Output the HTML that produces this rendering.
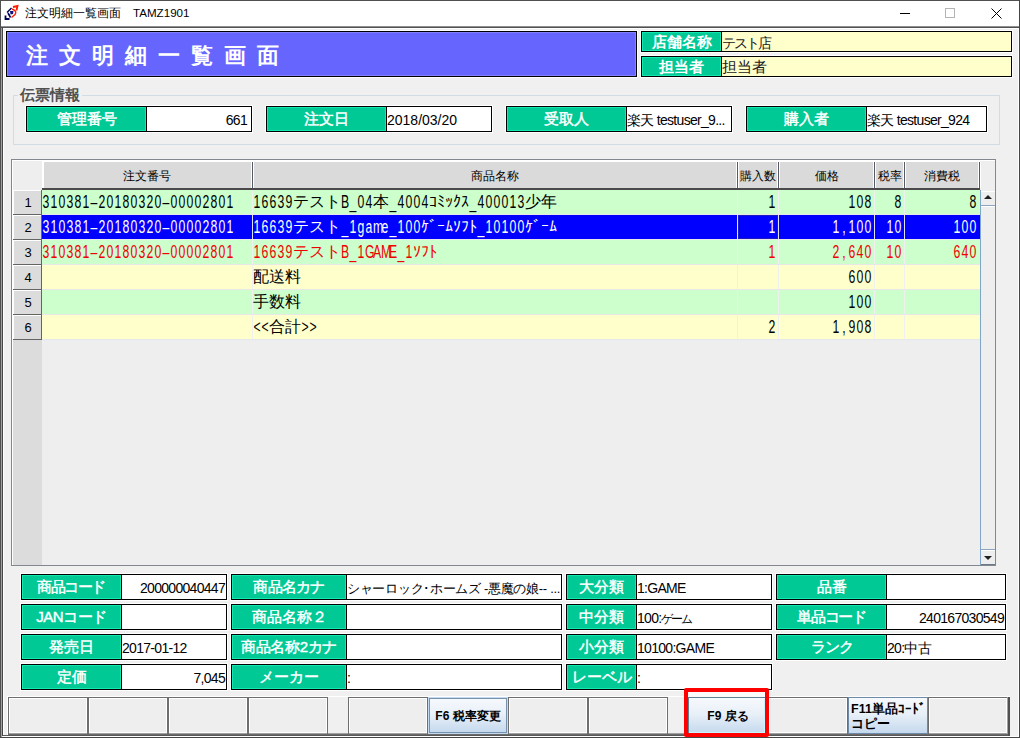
<!DOCTYPE html><html><head><meta charset="utf-8"><style>
*{margin:0;padding:0;box-sizing:border-box}
html,body{width:1020px;height:738px;overflow:hidden;background:#F0F0F0;font-family:"Liberation Sans",sans-serif;position:relative}
.ga{display:inline-block;vertical-align:top;overflow:visible;font-family:"Liberation Sans",sans-serif;font-size:17.5px}
.ga>span{display:inline-block;transform:scaleX(0.7);transform-origin:0 0;white-space:nowrap}
.ga i{display:inline-block;width:11.4286px;text-align:center;font-style:normal}
.gj{font-family:"Liberation Sans",sans-serif;font-size:16px}
.g{position:absolute;white-space:nowrap;line-height:24px;height:24px;color:#000}
.lab{position:absolute;color:#fff;text-align:center;white-space:nowrap}
.val{position:absolute;color:#000;white-space:nowrap;font-size:13px}
</style></head><body>
<div style="position:absolute;left:0px;top:0px;width:1020px;height:738px;background:#F0F0F0"></div>
<div style="position:absolute;left:1px;top:1px;width:1018px;height:25px;background:#FFFFFF"></div>
<div style="position:absolute;left:0px;top:0px;width:1020px;height:1px;background:#505050"></div>
<div style="position:absolute;left:0px;top:0px;width:1px;height:738px;background:#505050"></div>
<div style="position:absolute;left:1px;top:26px;width:1px;height:712px;background:#A0A0A0"></div>
<div style="position:absolute;left:2px;top:26px;width:1px;height:712px;background:#454545"></div>
<div style="position:absolute;left:1019px;top:0px;width:1px;height:738px;background:#454545"></div>
<div style="position:absolute;left:1018px;top:26px;width:1px;height:712px;background:#FFFFFF"></div>
<div style="position:absolute;left:0px;top:737px;width:1020px;height:1px;background:#454545"></div>
<div style="position:absolute;left:2px;top:736px;width:1017px;height:1px;background:#FFFFFF"></div>
<div style="position:absolute;left:1px;top:26px;width:1018px;height:1px;background:#909090"></div>
<div style="position:absolute;left:1px;top:27px;width:1018px;height:1px;background:#505050"></div>
<div style="position:absolute;left:3px;top:28px;width:1015px;height:1px;background:#FFFFFF"></div>
<div style="position:absolute;left:3px;top:28px;width:1px;height:708px;background:#FFFFFF"></div>
<svg style="position:absolute;left:0px;top:0px" width="24" height="24" viewBox="0 0 24 24">
<path d="M11.5 8 L7 12.5" stroke="#000050" stroke-width="1.4" fill="none"/>
<path d="M8 13 L10.5 17.5" stroke="#000050" stroke-width="1.6" fill="none"/>
<path d="M5.5 15.5 L5.5 19 L9.5 19" stroke="#000050" stroke-width="1.8" fill="none"/>
<path d="M10 11 L13.5 11 L13 14 L10.5 14.5 Z" fill="#101080"/>
<path d="M12 9 Q17.5 11 15 14.5 L11.5 17.5" stroke="#FF1A00" stroke-width="1.4" fill="none"/>
<path d="M13 7 L17.5 6 L16.5 10.5" stroke="#FF1A00" stroke-width="1.8" fill="none"/>
</svg>
<div style="position:absolute;left:25px;top:5px;white-space:nowrap;font-size:12px;color:#000;line-height:16px">注文明細一覧画面　<span style="font-size:11.6px">TAMZ1901</span></div>
<div style="position:absolute;left:900px;top:13px;width:10px;height:1px;background:#000"></div>
<div style="position:absolute;left:945px;top:8px;width:10px;height:10px;border:1px solid #B4B4B4"></div>
<svg style="position:absolute;left:990px;top:7px" width="12" height="12" viewBox="0 0 12 12"><path d="M1.5 1.5 L11.5 11.5 M11.5 1.5 L1.5 11.5" stroke="#000" stroke-width="1"/></svg>
<div style="position:absolute;left:6px;top:31px;width:631px;height:46px;background:#6666FF;border:1px solid #000;box-shadow:0 0 0 1px #FFFFFF,inset 0 0 0 1px #8282FF"></div>
<div style="position:absolute;left:26px;top:42px;white-space:nowrap;font-size:22px;font-weight:bold;color:#fff;letter-spacing:2.43px;word-spacing:0px;line-height:28px">注 文 明 細 一 覧 画 面</div>
<div style="position:absolute;left:641px;top:31px;width:371px;height:21px;background:#FFFFCC;border:1px solid #000;box-shadow:0 0 0 1px #FFFFFF"></div>
<div style="position:absolute;left:641px;top:31px;width:81px;height:21px;background:#00C996;border:1px solid #000;box-shadow:inset 0 0 0 1px #12E8B2"></div>
<div class="lab" style="left:642px;top:31px;width:79px;height:21px;line-height:21px;font-size:15px;font-weight:bold">店舗名称</div>
<div class="val" style="left:722px;top:31px;height:21px;line-height:21px;font-size:13.5px;letter-spacing:-2px;color:#202020;padding-top:2px">テスト店</div>
<div style="position:absolute;left:641px;top:56px;width:371px;height:21px;background:#FFFFCC;border:1px solid #000;box-shadow:0 0 0 1px #FFFFFF"></div>
<div style="position:absolute;left:641px;top:56px;width:81px;height:21px;background:#00C996;border:1px solid #000;box-shadow:inset 0 0 0 1px #12E8B2"></div>
<div class="lab" style="left:642px;top:56px;width:79px;height:21px;line-height:21px;font-size:15px;font-weight:bold">担当者</div>
<div class="val" style="left:722px;top:56px;height:21px;line-height:21px;font-size:15px;color:#202020">担当者</div>
<div style="position:absolute;left:13px;top:95px;width:987px;height:50px;border:1px solid #D0DCE6"></div>
<div style="position:absolute;left:18px;top:87px;white-space:nowrap;font-size:14.5px;font-weight:bold;color:#505050;background:#F0F0F0;padding:0 2px;line-height:16px">伝票情報</div>
<div style="position:absolute;left:26px;top:106px;width:226px;height:26px;background:#FFFFFF;border:1px solid #000;box-shadow:0 0 0 1px #FFFFFF"></div>
<div style="position:absolute;left:26px;top:106px;width:121px;height:26px;background:#00C996;border:1px solid #000;box-shadow:inset 0 0 0 1px #12E8B2"></div>
<div class="lab" style="left:27px;top:106px;width:119px;height:26px;line-height:26px;font-size:15px;-webkit-text-stroke:0.5px #fff">管理番号</div>
<div class="val" style="left:147px;top:106px;width:104px;height:26px;line-height:26px;text-align:right;font-size:14px;letter-spacing:-0.7px;padding-right:4px;padding-top:1px">661</div>
<div style="position:absolute;left:266px;top:106px;width:226px;height:26px;background:#FFFFFF;border:1px solid #000;box-shadow:0 0 0 1px #FFFFFF"></div>
<div style="position:absolute;left:266px;top:106px;width:121px;height:26px;background:#00C996;border:1px solid #000;box-shadow:inset 0 0 0 1px #12E8B2"></div>
<div class="lab" style="left:267px;top:106px;width:119px;height:26px;line-height:26px;font-size:15px;-webkit-text-stroke:0.5px #fff">注文日</div>
<div class="val" style="left:387px;top:106px;height:26px;line-height:26px;font-size:14px;letter-spacing:-0.7px;padding-right:4px;padding-top:1px"><span style="letter-spacing:0">2018/03/20</span></div>
<div style="position:absolute;left:506px;top:106px;width:226px;height:26px;background:#FFFFFF;border:1px solid #000;box-shadow:0 0 0 1px #FFFFFF"></div>
<div style="position:absolute;left:506px;top:106px;width:121px;height:26px;background:#00C996;border:1px solid #000;box-shadow:inset 0 0 0 1px #12E8B2"></div>
<div class="lab" style="left:507px;top:106px;width:119px;height:26px;line-height:26px;font-size:15px;-webkit-text-stroke:0.5px #fff">受取人</div>
<div class="val" style="left:627px;top:106px;height:26px;line-height:26px;font-size:14px;letter-spacing:-0.7px;padding-right:4px;padding-top:1px">楽天 testuser_9...</div>
<div style="position:absolute;left:746px;top:106px;width:241px;height:26px;background:#FFFFFF;border:1px solid #000;box-shadow:0 0 0 1px #FFFFFF"></div>
<div style="position:absolute;left:746px;top:106px;width:121px;height:26px;background:#00C996;border:1px solid #000;box-shadow:inset 0 0 0 1px #12E8B2"></div>
<div class="lab" style="left:747px;top:106px;width:119px;height:26px;line-height:26px;font-size:15px;-webkit-text-stroke:0.5px #fff">購入者</div>
<div class="val" style="left:867px;top:106px;height:26px;line-height:26px;font-size:14px;letter-spacing:-0.7px;padding-right:4px;padding-top:1px">楽天 testuser_924</div>
<div style="position:absolute;left:11px;top:159px;width:985px;height:407px;background:#EEEEEE;border:1px solid #828790"></div>
<div style="position:absolute;left:12px;top:160px;width:983px;height:1px;background:#FFFFFF"></div>
<div style="position:absolute;left:12px;top:160px;width:1px;height:405px;background:#FFFFFF"></div>
<div style="position:absolute;left:13px;top:161px;width:29px;height:29px;background:#EEEEEE"></div>
<div style="position:absolute;left:42px;top:161px;width:2px;height:28px;background:#FFFFFF"></div>
<div style="position:absolute;left:44px;top:161px;width:936px;height:1px;background:#FFFFFF"></div>
<div style="position:absolute;left:44px;top:162px;width:936px;height:27px;background:#DADADA"></div>
<div style="position:absolute;left:42px;top:188px;width:938px;height:2px;background:#4A4A4A"></div>
<div style="position:absolute;left:251px;top:162px;width:3px;height:26px;background:#FFFFFF"></div>
<div style="position:absolute;left:252px;top:162px;width:1px;height:26px;background:#555A66"></div>
<div style="position:absolute;left:42px;top:162px;width:210px;height:27px;line-height:29px;text-align:center;font-size:12px;color:#000;white-space:nowrap">注文番号</div>
<div style="position:absolute;left:736px;top:162px;width:3px;height:26px;background:#FFFFFF"></div>
<div style="position:absolute;left:737px;top:162px;width:1px;height:26px;background:#555A66"></div>
<div style="position:absolute;left:253px;top:162px;width:484px;height:27px;line-height:29px;text-align:center;font-size:12px;color:#000;white-space:nowrap">商品名称</div>
<div style="position:absolute;left:777px;top:162px;width:3px;height:26px;background:#FFFFFF"></div>
<div style="position:absolute;left:778px;top:162px;width:1px;height:26px;background:#555A66"></div>
<div style="position:absolute;left:738px;top:162px;width:40px;height:27px;line-height:29px;text-align:center;font-size:12px;color:#000;white-space:nowrap">購入数</div>
<div style="position:absolute;left:873px;top:162px;width:3px;height:26px;background:#FFFFFF"></div>
<div style="position:absolute;left:874px;top:162px;width:1px;height:26px;background:#555A66"></div>
<div style="position:absolute;left:779px;top:162px;width:95px;height:27px;line-height:29px;text-align:center;font-size:12px;color:#000;white-space:nowrap">価格</div>
<div style="position:absolute;left:903px;top:162px;width:3px;height:26px;background:#FFFFFF"></div>
<div style="position:absolute;left:904px;top:162px;width:1px;height:26px;background:#555A66"></div>
<div style="position:absolute;left:875px;top:162px;width:29px;height:27px;line-height:29px;text-align:center;font-size:12px;color:#000;white-space:nowrap">税率</div>
<div style="position:absolute;left:978px;top:162px;width:3px;height:26px;background:#FFFFFF"></div>
<div style="position:absolute;left:979px;top:162px;width:1px;height:26px;background:#555A66"></div>
<div style="position:absolute;left:905px;top:162px;width:74px;height:27px;line-height:29px;text-align:center;font-size:12px;color:#000;white-space:nowrap">消費税</div>
<div style="position:absolute;left:13px;top:190px;width:29px;height:375px;background:#DCDCDC"></div>
<div style="position:absolute;left:42px;top:190px;width:938px;height:25px;background:#CCFFCC"></div>
<div style="position:absolute;left:42px;top:214px;width:938px;height:1px;background:#E8E8E8"></div>
<div style="position:absolute;left:13px;top:214px;width:29px;height:1px;background:#646464"></div>
<div style="position:absolute;left:41px;top:190px;width:1px;height:25px;background:#646464"></div>
<div style="position:absolute;left:13px;top:190px;width:28px;height:1px;background:#FFFFFF"></div>
<div style="position:absolute;left:13px;top:190px;width:1px;height:24px;background:#FFFFFF"></div>
<div style="position:absolute;left:14px;top:191px;width:28px;height:24px;line-height:24px;text-align:center;font-size:13px;color:#000">1</div>
<div style="position:absolute;left:252px;top:190px;width:1px;height:24px;background:#F0F0F0"></div>
<div class="g" style="left:42px;top:190px;color:#000"><span class="ga" style="width:192px"><span><i>3</i><i>1</i><i>0</i><i>3</i><i>8</i><i>1</i><i>–</i><i>2</i><i>0</i><i>1</i><i>8</i><i>0</i><i>3</i><i>2</i><i>0</i><i>–</i><i>0</i><i>0</i><i>0</i><i>0</i><i>2</i><i>8</i><i>0</i><i>1</i></span></span></div>
<div style="position:absolute;left:737px;top:190px;width:1px;height:24px;background:#F0F0F0"></div>
<div class="g" style="left:253px;top:190px;color:#000"><span class="ga" style="width:40px"><span><i>1</i><i>6</i><i>6</i><i>3</i><i>9</i></span></span><span class="gj">テスト</span><span class="ga" style="width:32px"><span><i>B</i><i>_</i><i>0</i><i>4</i></span></span><span class="gj">本</span><span class="ga" style="width:40px"><span><i>_</i><i>4</i><i>0</i><i>0</i><i>4</i></span></span><span class="gj">ｺﾐｯｸｽ</span><span class="ga" style="width:56px"><span><i>_</i><i>4</i><i>0</i><i>0</i><i>0</i><i>1</i><i>3</i></span></span><span class="gj">少年</span></div>
<div style="position:absolute;left:778px;top:190px;width:1px;height:24px;background:#F0F0F0"></div>
<div class="g" style="left:738px;top:190px;width:38px;text-align:right;color:#000"><span class="ga" style="width:8px"><span><i>1</i></span></span></div>
<div style="position:absolute;left:874px;top:190px;width:1px;height:24px;background:#F0F0F0"></div>
<div class="g" style="left:779px;top:190px;width:93px;text-align:right;color:#000"><span class="ga" style="width:24px"><span><i>1</i><i>0</i><i>8</i></span></span></div>
<div style="position:absolute;left:904px;top:190px;width:1px;height:24px;background:#F0F0F0"></div>
<div class="g" style="left:875px;top:190px;width:27px;text-align:right;color:#000"><span class="ga" style="width:8px"><span><i>8</i></span></span></div>
<div class="g" style="left:905px;top:190px;width:72px;text-align:right;color:#000"><span class="ga" style="width:8px"><span><i>8</i></span></span></div>
<div style="position:absolute;left:42px;top:215px;width:938px;height:25px;background:#0000FF"></div>
<div style="position:absolute;left:42px;top:239px;width:938px;height:1px;background:#E8E8E8"></div>
<div style="position:absolute;left:13px;top:239px;width:29px;height:1px;background:#646464"></div>
<div style="position:absolute;left:41px;top:215px;width:1px;height:25px;background:#646464"></div>
<div style="position:absolute;left:13px;top:215px;width:28px;height:1px;background:#FFFFFF"></div>
<div style="position:absolute;left:13px;top:215px;width:1px;height:24px;background:#FFFFFF"></div>
<div style="position:absolute;left:14px;top:216px;width:28px;height:24px;line-height:24px;text-align:center;font-size:13px;color:#000">2</div>
<div style="position:absolute;left:252px;top:215px;width:1px;height:24px;background:#E0E0FF"></div>
<div class="g" style="left:42px;top:215px;color:#FFF"><span class="ga" style="width:192px"><span><i>3</i><i>1</i><i>0</i><i>3</i><i>8</i><i>1</i><i>–</i><i>2</i><i>0</i><i>1</i><i>8</i><i>0</i><i>3</i><i>2</i><i>0</i><i>–</i><i>0</i><i>0</i><i>0</i><i>0</i><i>2</i><i>8</i><i>0</i><i>1</i></span></span></div>
<div style="position:absolute;left:737px;top:215px;width:1px;height:24px;background:#E0E0FF"></div>
<div class="g" style="left:253px;top:215px;color:#FFF"><span class="ga" style="width:40px"><span><i>1</i><i>6</i><i>6</i><i>3</i><i>9</i></span></span><span class="gj">テスト</span><span class="ga" style="width:80px"><span><i>_</i><i>1</i><i>g</i><i>a</i><i>m</i><i>e</i><i>_</i><i>1</i><i>0</i><i>0</i></span></span><span class="gj">ｹﾞｰﾑｿﾌﾄ</span><span class="ga" style="width:48px"><span><i>_</i><i>1</i><i>0</i><i>1</i><i>0</i><i>0</i></span></span><span class="gj">ｹﾞｰﾑ</span></div>
<div style="position:absolute;left:778px;top:215px;width:1px;height:24px;background:#E0E0FF"></div>
<div class="g" style="left:738px;top:215px;width:38px;text-align:right;color:#FFF"><span class="ga" style="width:8px"><span><i>1</i></span></span></div>
<div style="position:absolute;left:874px;top:215px;width:1px;height:24px;background:#E0E0FF"></div>
<div class="g" style="left:779px;top:215px;width:93px;text-align:right;color:#FFF"><span class="ga" style="width:40px"><span><i>1</i><i>,</i><i>1</i><i>0</i><i>0</i></span></span></div>
<div style="position:absolute;left:904px;top:215px;width:1px;height:24px;background:#E0E0FF"></div>
<div class="g" style="left:875px;top:215px;width:27px;text-align:right;color:#FFF"><span class="ga" style="width:16px"><span><i>1</i><i>0</i></span></span></div>
<div class="g" style="left:905px;top:215px;width:72px;text-align:right;color:#FFF"><span class="ga" style="width:24px"><span><i>1</i><i>0</i><i>0</i></span></span></div>
<div style="position:absolute;left:42px;top:240px;width:938px;height:25px;background:#CCFFCC"></div>
<div style="position:absolute;left:42px;top:264px;width:938px;height:1px;background:#E8E8E8"></div>
<div style="position:absolute;left:13px;top:264px;width:29px;height:1px;background:#646464"></div>
<div style="position:absolute;left:41px;top:240px;width:1px;height:25px;background:#646464"></div>
<div style="position:absolute;left:13px;top:240px;width:28px;height:1px;background:#FFFFFF"></div>
<div style="position:absolute;left:13px;top:240px;width:1px;height:24px;background:#FFFFFF"></div>
<div style="position:absolute;left:14px;top:241px;width:28px;height:24px;line-height:24px;text-align:center;font-size:13px;color:#000">3</div>
<div style="position:absolute;left:252px;top:240px;width:1px;height:24px;background:#F0F0F0"></div>
<div class="g" style="left:42px;top:240px;color:#F00000"><span class="ga" style="width:192px"><span><i>3</i><i>1</i><i>0</i><i>3</i><i>8</i><i>1</i><i>–</i><i>2</i><i>0</i><i>1</i><i>8</i><i>0</i><i>3</i><i>2</i><i>0</i><i>–</i><i>0</i><i>0</i><i>0</i><i>0</i><i>2</i><i>8</i><i>0</i><i>1</i></span></span></div>
<div style="position:absolute;left:737px;top:240px;width:1px;height:24px;background:#F0F0F0"></div>
<div class="g" style="left:253px;top:240px;color:#F00000"><span class="ga" style="width:40px"><span><i>1</i><i>6</i><i>6</i><i>3</i><i>9</i></span></span><span class="gj">テスト</span><span class="ga" style="width:72px"><span><i>B</i><i>_</i><i>1</i><i>G</i><i>A</i><i>M</i><i>E</i><i>_</i><i>1</i></span></span><span class="gj">ｿﾌﾄ</span></div>
<div style="position:absolute;left:778px;top:240px;width:1px;height:24px;background:#F0F0F0"></div>
<div class="g" style="left:738px;top:240px;width:38px;text-align:right;color:#F00000"><span class="ga" style="width:8px"><span><i>1</i></span></span></div>
<div style="position:absolute;left:874px;top:240px;width:1px;height:24px;background:#F0F0F0"></div>
<div class="g" style="left:779px;top:240px;width:93px;text-align:right;color:#F00000"><span class="ga" style="width:40px"><span><i>2</i><i>,</i><i>6</i><i>4</i><i>0</i></span></span></div>
<div style="position:absolute;left:904px;top:240px;width:1px;height:24px;background:#F0F0F0"></div>
<div class="g" style="left:875px;top:240px;width:27px;text-align:right;color:#F00000"><span class="ga" style="width:16px"><span><i>1</i><i>0</i></span></span></div>
<div class="g" style="left:905px;top:240px;width:72px;text-align:right;color:#F00000"><span class="ga" style="width:24px"><span><i>6</i><i>4</i><i>0</i></span></span></div>
<div style="position:absolute;left:42px;top:265px;width:938px;height:25px;background:#FFFFCC"></div>
<div style="position:absolute;left:42px;top:289px;width:938px;height:1px;background:#E8E8E8"></div>
<div style="position:absolute;left:13px;top:289px;width:29px;height:1px;background:#646464"></div>
<div style="position:absolute;left:41px;top:265px;width:1px;height:25px;background:#646464"></div>
<div style="position:absolute;left:13px;top:265px;width:28px;height:1px;background:#FFFFFF"></div>
<div style="position:absolute;left:13px;top:265px;width:1px;height:24px;background:#FFFFFF"></div>
<div style="position:absolute;left:14px;top:266px;width:28px;height:24px;line-height:24px;text-align:center;font-size:13px;color:#000">4</div>
<div style="position:absolute;left:252px;top:265px;width:1px;height:24px;background:#F0F0F0"></div>
<div style="position:absolute;left:737px;top:265px;width:1px;height:24px;background:#F0F0F0"></div>
<div class="g" style="left:253px;top:265px;color:#000"><span class="gj">配送料</span></div>
<div style="position:absolute;left:778px;top:265px;width:1px;height:24px;background:#F0F0F0"></div>
<div style="position:absolute;left:874px;top:265px;width:1px;height:24px;background:#F0F0F0"></div>
<div class="g" style="left:779px;top:265px;width:93px;text-align:right;color:#000"><span class="ga" style="width:24px"><span><i>6</i><i>0</i><i>0</i></span></span></div>
<div style="position:absolute;left:904px;top:265px;width:1px;height:24px;background:#F0F0F0"></div>
<div style="position:absolute;left:42px;top:290px;width:938px;height:25px;background:#CCFFCC"></div>
<div style="position:absolute;left:42px;top:314px;width:938px;height:1px;background:#E8E8E8"></div>
<div style="position:absolute;left:13px;top:314px;width:29px;height:1px;background:#646464"></div>
<div style="position:absolute;left:41px;top:290px;width:1px;height:25px;background:#646464"></div>
<div style="position:absolute;left:13px;top:290px;width:28px;height:1px;background:#FFFFFF"></div>
<div style="position:absolute;left:13px;top:290px;width:1px;height:24px;background:#FFFFFF"></div>
<div style="position:absolute;left:14px;top:291px;width:28px;height:24px;line-height:24px;text-align:center;font-size:13px;color:#000">5</div>
<div style="position:absolute;left:252px;top:290px;width:1px;height:24px;background:#F0F0F0"></div>
<div style="position:absolute;left:737px;top:290px;width:1px;height:24px;background:#F0F0F0"></div>
<div class="g" style="left:253px;top:290px;color:#000"><span class="gj">手数料</span></div>
<div style="position:absolute;left:778px;top:290px;width:1px;height:24px;background:#F0F0F0"></div>
<div style="position:absolute;left:874px;top:290px;width:1px;height:24px;background:#F0F0F0"></div>
<div class="g" style="left:779px;top:290px;width:93px;text-align:right;color:#000"><span class="ga" style="width:24px"><span><i>1</i><i>0</i><i>0</i></span></span></div>
<div style="position:absolute;left:904px;top:290px;width:1px;height:24px;background:#F0F0F0"></div>
<div style="position:absolute;left:42px;top:315px;width:938px;height:25px;background:#FFFFCC"></div>
<div style="position:absolute;left:42px;top:339px;width:938px;height:1px;background:#E8E8E8"></div>
<div style="position:absolute;left:13px;top:339px;width:29px;height:1px;background:#646464"></div>
<div style="position:absolute;left:41px;top:315px;width:1px;height:25px;background:#646464"></div>
<div style="position:absolute;left:13px;top:315px;width:28px;height:1px;background:#FFFFFF"></div>
<div style="position:absolute;left:13px;top:315px;width:1px;height:24px;background:#FFFFFF"></div>
<div style="position:absolute;left:14px;top:316px;width:28px;height:24px;line-height:24px;text-align:center;font-size:13px;color:#000">6</div>
<div style="position:absolute;left:252px;top:315px;width:1px;height:24px;background:#F0F0F0"></div>
<div style="position:absolute;left:737px;top:315px;width:1px;height:24px;background:#F0F0F0"></div>
<div class="g" style="left:253px;top:315px;color:#000"><span class="ga" style="width:16px"><span><i>&lt;</i><i>&lt;</i></span></span><span class="gj">合計</span><span class="ga" style="width:16px"><span><i>&gt;</i><i>&gt;</i></span></span></div>
<div style="position:absolute;left:778px;top:315px;width:1px;height:24px;background:#F0F0F0"></div>
<div class="g" style="left:738px;top:315px;width:38px;text-align:right;color:#000"><span class="ga" style="width:8px"><span><i>2</i></span></span></div>
<div style="position:absolute;left:874px;top:315px;width:1px;height:24px;background:#F0F0F0"></div>
<div class="g" style="left:779px;top:315px;width:93px;text-align:right;color:#000"><span class="ga" style="width:40px"><span><i>1</i><i>,</i><i>9</i><i>0</i><i>8</i></span></span></div>
<div style="position:absolute;left:904px;top:315px;width:1px;height:24px;background:#F0F0F0"></div>
<div style="position:absolute;left:42px;top:340px;width:938px;height:1px;background:#E8EDF2"></div>
<div style="position:absolute;left:738px;top:215px;width:40px;height:24px;border:1px solid #1A1AC0"></div>
<div style="position:absolute;left:980px;top:190px;width:1px;height:375px;background:#7FA6C8"></div>
<div style="position:absolute;left:981px;top:190px;width:14px;height:375px;background:#EEEEEE"></div>
<div style="position:absolute;left:981px;top:205px;width:14px;height:1px;background:#8EA4BC"></div>
<div style="position:absolute;left:981px;top:191px;width:14px;height:1px;background:#FFFFFF"></div>
<div style="position:absolute;left:981px;top:206px;width:14px;height:1px;background:#FFFFFF"></div>
<div style="position:absolute;left:981px;top:549px;width:14px;height:1px;background:#8EA4BC"></div>
<div style="position:absolute;left:981px;top:550px;width:14px;height:1px;background:#FFFFFF"></div>
<div style="position:absolute;left:981px;top:564px;width:14px;height:1px;background:#6A7A8A"></div>
<svg style="position:absolute;left:983px;top:194px" width="10" height="6"><path d="M1 5 L5 1 L9 5 Z" fill="#202020"/></svg>
<svg style="position:absolute;left:983px;top:555px" width="10" height="6"><path d="M1 1 L5 5 L9 1 Z" fill="#202020"/></svg>
<div style="position:absolute;left:21px;top:574px;width:206px;height:26px;background:#FFFFFF;border:1px solid #000;box-shadow:0 0 0 1px #FFFFFF"></div>
<div style="position:absolute;left:21px;top:574px;width:101px;height:26px;background:#00C996;border:1px solid #000;box-shadow:inset 0 0 0 1px #12E8B2"></div>
<div class="lab" style="left:22px;top:574px;width:99px;height:26px;line-height:26px;font-size:15px;-webkit-text-stroke:0.45px #fff;letter-spacing:-1.5px;text-indent:-1px">商品コード</div>
<div class="val" style="left:122px;top:574px;width:104px;height:26px;line-height:26px;text-align:right;font-size:14px;letter-spacing:-0.7px;padding-right:1px;padding-top:1px">200000040447</div>
<div style="position:absolute;left:231px;top:574px;width:331px;height:26px;background:#FFFFFF;border:1px solid #000;box-shadow:0 0 0 1px #FFFFFF"></div>
<div style="position:absolute;left:231px;top:574px;width:116px;height:26px;background:#00C996;border:1px solid #000;box-shadow:inset 0 0 0 1px #12E8B2"></div>
<div class="lab" style="left:232px;top:574px;width:114px;height:26px;line-height:26px;font-size:15px;-webkit-text-stroke:0.45px #fff;letter-spacing:-0.8px">商品名カナ<span></span></div>
<div class="val" style="left:347px;top:574px;height:26px;line-height:26px;font-size:14px;letter-spacing:-0.7px;padding-right:1px;padding-top:1px"><span style="font-size:13px;letter-spacing:-0.3px">シャーロック･ホームズ ‐悪魔の娘‐‐ ...</span></div>
<div style="position:absolute;left:566px;top:574px;width:206px;height:26px;background:#FFFFFF;border:1px solid #000;box-shadow:0 0 0 1px #FFFFFF"></div>
<div style="position:absolute;left:566px;top:574px;width:71px;height:26px;background:#00C996;border:1px solid #000;box-shadow:inset 0 0 0 1px #12E8B2"></div>
<div class="lab" style="left:567px;top:574px;width:69px;height:26px;line-height:26px;font-size:15px;-webkit-text-stroke:0.45px #fff">大分類</div>
<div class="val" style="left:637px;top:574px;height:26px;line-height:26px;font-size:14px;letter-spacing:-0.7px;padding-right:1px;padding-top:1px">1:GAME</div>
<div style="position:absolute;left:776px;top:574px;width:230px;height:26px;background:#FFFFFF;border:1px solid #000;box-shadow:0 0 0 1px #FFFFFF"></div>
<div style="position:absolute;left:776px;top:574px;width:111px;height:26px;background:#00C996;border:1px solid #000;box-shadow:inset 0 0 0 1px #12E8B2"></div>
<div class="lab" style="left:777px;top:574px;width:109px;height:26px;line-height:26px;font-size:15px;-webkit-text-stroke:0.45px #fff">品番</div>
<div style="position:absolute;left:21px;top:604px;width:206px;height:26px;background:#FFFFFF;border:1px solid #000;box-shadow:0 0 0 1px #FFFFFF"></div>
<div style="position:absolute;left:21px;top:604px;width:101px;height:26px;background:#00C996;border:1px solid #000;box-shadow:inset 0 0 0 1px #12E8B2"></div>
<div class="lab" style="left:22px;top:604px;width:99px;height:26px;line-height:26px;font-size:15px;-webkit-text-stroke:0.45px #fff;letter-spacing:-0.5px">JANコード</div>
<div style="position:absolute;left:231px;top:604px;width:331px;height:26px;background:#FFFFFF;border:1px solid #000;box-shadow:0 0 0 1px #FFFFFF"></div>
<div style="position:absolute;left:231px;top:604px;width:116px;height:26px;background:#00C996;border:1px solid #000;box-shadow:inset 0 0 0 1px #12E8B2"></div>
<div class="lab" style="left:232px;top:604px;width:114px;height:26px;line-height:26px;font-size:15px;-webkit-text-stroke:0.45px #fff">商品名称２</div>
<div style="position:absolute;left:566px;top:604px;width:206px;height:26px;background:#FFFFFF;border:1px solid #000;box-shadow:0 0 0 1px #FFFFFF"></div>
<div style="position:absolute;left:566px;top:604px;width:71px;height:26px;background:#00C996;border:1px solid #000;box-shadow:inset 0 0 0 1px #12E8B2"></div>
<div class="lab" style="left:567px;top:604px;width:69px;height:26px;line-height:26px;font-size:15px;-webkit-text-stroke:0.45px #fff">中分類</div>
<div class="val" style="left:637px;top:604px;height:26px;line-height:26px;font-size:14px;letter-spacing:-0.7px;padding-right:1px;padding-top:1px">100:<span style="font-size:12px;letter-spacing:-2.3px">ゲーム</span></div>
<div style="position:absolute;left:776px;top:604px;width:230px;height:26px;background:#FFFFFF;border:1px solid #000;box-shadow:0 0 0 1px #FFFFFF"></div>
<div style="position:absolute;left:776px;top:604px;width:111px;height:26px;background:#00C996;border:1px solid #000;box-shadow:inset 0 0 0 1px #12E8B2"></div>
<div class="lab" style="left:777px;top:604px;width:109px;height:26px;line-height:26px;font-size:15px;-webkit-text-stroke:0.45px #fff;letter-spacing:-1.2px">単品コード</div>
<div class="val" style="left:887px;top:604px;width:118px;height:26px;line-height:26px;text-align:right;font-size:14px;letter-spacing:-0.7px;padding-right:1px;padding-top:1px">240167030549</div>
<div style="position:absolute;left:21px;top:634px;width:206px;height:26px;background:#FFFFFF;border:1px solid #000;box-shadow:0 0 0 1px #FFFFFF"></div>
<div style="position:absolute;left:21px;top:634px;width:101px;height:26px;background:#00C996;border:1px solid #000;box-shadow:inset 0 0 0 1px #12E8B2"></div>
<div class="lab" style="left:22px;top:634px;width:99px;height:26px;line-height:26px;font-size:15px;-webkit-text-stroke:0.45px #fff">発売日</div>
<div class="val" style="left:122px;top:634px;height:26px;line-height:26px;font-size:14px;letter-spacing:-0.7px;padding-right:1px;padding-top:1px">2017-01-12</div>
<div style="position:absolute;left:231px;top:634px;width:331px;height:26px;background:#FFFFFF;border:1px solid #000;box-shadow:0 0 0 1px #FFFFFF"></div>
<div style="position:absolute;left:231px;top:634px;width:116px;height:26px;background:#00C996;border:1px solid #000;box-shadow:inset 0 0 0 1px #12E8B2"></div>
<div class="lab" style="left:232px;top:634px;width:114px;height:26px;line-height:26px;font-size:15px;-webkit-text-stroke:0.45px #fff;letter-spacing:-0.3px">商品名称2カナ</div>
<div style="position:absolute;left:566px;top:634px;width:206px;height:26px;background:#FFFFFF;border:1px solid #000;box-shadow:0 0 0 1px #FFFFFF"></div>
<div style="position:absolute;left:566px;top:634px;width:71px;height:26px;background:#00C996;border:1px solid #000;box-shadow:inset 0 0 0 1px #12E8B2"></div>
<div class="lab" style="left:567px;top:634px;width:69px;height:26px;line-height:26px;font-size:15px;-webkit-text-stroke:0.45px #fff">小分類</div>
<div class="val" style="left:637px;top:634px;height:26px;line-height:26px;font-size:14px;letter-spacing:-0.7px;padding-right:1px;padding-top:1px">10100:GAME</div>
<div style="position:absolute;left:776px;top:634px;width:230px;height:26px;background:#FFFFFF;border:1px solid #000;box-shadow:0 0 0 1px #FFFFFF"></div>
<div style="position:absolute;left:776px;top:634px;width:111px;height:26px;background:#00C996;border:1px solid #000;box-shadow:inset 0 0 0 1px #12E8B2"></div>
<div class="lab" style="left:777px;top:634px;width:109px;height:26px;line-height:26px;font-size:15px;-webkit-text-stroke:0.45px #fff;letter-spacing:-1.3px;text-indent:1px">ランク</div>
<div class="val" style="left:887px;top:634px;height:26px;line-height:26px;font-size:14px;letter-spacing:-0.7px;padding-right:1px;padding-top:1px">20:中古</div>
<div style="position:absolute;left:21px;top:664px;width:206px;height:26px;background:#FFFFFF;border:1px solid #000;box-shadow:0 0 0 1px #FFFFFF"></div>
<div style="position:absolute;left:21px;top:664px;width:101px;height:26px;background:#00C996;border:1px solid #000;box-shadow:inset 0 0 0 1px #12E8B2"></div>
<div class="lab" style="left:22px;top:664px;width:99px;height:26px;line-height:26px;font-size:15px;-webkit-text-stroke:0.45px #fff">定価</div>
<div class="val" style="left:122px;top:664px;width:104px;height:26px;line-height:26px;text-align:right;font-size:14px;letter-spacing:-0.7px;padding-right:1px;padding-top:1px">7,045</div>
<div style="position:absolute;left:231px;top:664px;width:331px;height:26px;background:#FFFFFF;border:1px solid #000;box-shadow:0 0 0 1px #FFFFFF"></div>
<div style="position:absolute;left:231px;top:664px;width:116px;height:26px;background:#00C996;border:1px solid #000;box-shadow:inset 0 0 0 1px #12E8B2"></div>
<div class="lab" style="left:232px;top:664px;width:114px;height:26px;line-height:26px;font-size:15px;-webkit-text-stroke:0.45px #fff">メーカー</div>
<div class="val" style="left:347px;top:664px;height:26px;line-height:26px;font-size:14px;letter-spacing:-0.7px;padding-right:1px;padding-top:1px">:</div>
<div style="position:absolute;left:566px;top:664px;width:206px;height:26px;background:#FFFFFF;border:1px solid #000;box-shadow:0 0 0 1px #FFFFFF"></div>
<div style="position:absolute;left:566px;top:664px;width:71px;height:26px;background:#00C996;border:1px solid #000;box-shadow:inset 0 0 0 1px #12E8B2"></div>
<div class="lab" style="left:567px;top:664px;width:69px;height:26px;line-height:26px;font-size:15px;-webkit-text-stroke:0.45px #fff">レーベル</div>
<div class="val" style="left:637px;top:664px;height:26px;line-height:26px;font-size:14px;letter-spacing:-0.7px;padding-right:1px;padding-top:1px">:</div>
<div style="position:absolute;left:7px;top:696px;width:1003px;height:1px;background:#FFFFFF"></div>
<div style="position:absolute;left:7px;top:696px;width:1px;height:39px;background:#FFFFFF"></div>
<div style="position:absolute;left:8px;top:733px;width:1002px;height:1px;background:#A0A0A0"></div>
<div style="position:absolute;left:8px;top:734px;width:1002px;height:1px;background:#6A6A6A"></div>
<div style="position:absolute;left:3px;top:735px;width:1007px;height:1px;background:#5A5A5A"></div>
<div style="position:absolute;left:3px;top:736px;width:1015px;height:1px;background:#FFFFFF"></div>
<div style="position:absolute;left:8px;top:697px;width:80px;height:37px;background:#6E6E6E"></div>
<div style="position:absolute;left:9px;top:698px;width:78px;height:36px;background:#FFFFFF"></div>
<div style="position:absolute;left:9px;top:733px;width:78px;height:1px;background:#A0A0A0"></div>
<div style="position:absolute;left:10px;top:699px;width:76px;height:33px;background:#EEEEEE"></div>
<div style="position:absolute;left:88px;top:697px;width:80px;height:37px;background:#6E6E6E"></div>
<div style="position:absolute;left:89px;top:698px;width:78px;height:36px;background:#FFFFFF"></div>
<div style="position:absolute;left:89px;top:733px;width:78px;height:1px;background:#A0A0A0"></div>
<div style="position:absolute;left:90px;top:699px;width:76px;height:33px;background:#EEEEEE"></div>
<div style="position:absolute;left:168px;top:697px;width:80px;height:37px;background:#6E6E6E"></div>
<div style="position:absolute;left:169px;top:698px;width:78px;height:36px;background:#FFFFFF"></div>
<div style="position:absolute;left:169px;top:733px;width:78px;height:1px;background:#A0A0A0"></div>
<div style="position:absolute;left:170px;top:699px;width:76px;height:33px;background:#EEEEEE"></div>
<div style="position:absolute;left:248px;top:697px;width:80px;height:37px;background:#6E6E6E"></div>
<div style="position:absolute;left:249px;top:698px;width:78px;height:36px;background:#FFFFFF"></div>
<div style="position:absolute;left:249px;top:733px;width:78px;height:1px;background:#A0A0A0"></div>
<div style="position:absolute;left:250px;top:699px;width:76px;height:33px;background:#EEEEEE"></div>
<div style="position:absolute;left:348px;top:697px;width:80px;height:37px;background:#6E6E6E"></div>
<div style="position:absolute;left:349px;top:698px;width:78px;height:36px;background:#FFFFFF"></div>
<div style="position:absolute;left:349px;top:733px;width:78px;height:1px;background:#A0A0A0"></div>
<div style="position:absolute;left:350px;top:699px;width:76px;height:33px;background:#EEEEEE"></div>
<div style="position:absolute;left:428px;top:697px;width:80px;height:37px;background:#6E6E6E"></div>
<div style="position:absolute;left:429px;top:698px;width:78px;height:36px;background:#FFFFFF"></div>
<div style="position:absolute;left:429px;top:733px;width:78px;height:1px;background:#A0A0A0"></div>
<div style="position:absolute;left:430px;top:699px;width:76px;height:33px;background:#EEEEEE"></div>
<div style="position:absolute;left:428px;top:697px;width:80px;height:37px;background:#C4DAF0"></div>
<div style="position:absolute;left:429px;top:698px;width:78px;height:35px;border:1px solid #7892AE;background:linear-gradient(#F6F9FD,#E9F0F8 45%,#C5D9EE)"></div>
<div style="position:absolute;left:429px;top:698px;width:78px;height:35px;display:flex;align-items:center;justify-content:center;font-size:12px;font-weight:bold;color:#000;text-align:center;line-height:14px">F6 税率変更</div>
<div style="position:absolute;left:508px;top:697px;width:80px;height:37px;background:#6E6E6E"></div>
<div style="position:absolute;left:509px;top:698px;width:78px;height:36px;background:#FFFFFF"></div>
<div style="position:absolute;left:509px;top:733px;width:78px;height:1px;background:#A0A0A0"></div>
<div style="position:absolute;left:510px;top:699px;width:76px;height:33px;background:#EEEEEE"></div>
<div style="position:absolute;left:588px;top:697px;width:80px;height:37px;background:#6E6E6E"></div>
<div style="position:absolute;left:589px;top:698px;width:78px;height:36px;background:#FFFFFF"></div>
<div style="position:absolute;left:589px;top:733px;width:78px;height:1px;background:#A0A0A0"></div>
<div style="position:absolute;left:590px;top:699px;width:76px;height:33px;background:#EEEEEE"></div>
<div style="position:absolute;left:688px;top:697px;width:80px;height:37px;background:#6E6E6E"></div>
<div style="position:absolute;left:689px;top:698px;width:78px;height:36px;background:#FFFFFF"></div>
<div style="position:absolute;left:689px;top:733px;width:78px;height:1px;background:#A0A0A0"></div>
<div style="position:absolute;left:690px;top:699px;width:76px;height:33px;background:#EEEEEE"></div>
<div style="position:absolute;left:689px;top:692px;width:78px;height:5px;background:#FAFAFA"></div>
<div style="position:absolute;left:688px;top:697px;width:80px;height:37px;border:1px solid #5F7F8F;background:linear-gradient(#F6F9FD,#E9F0F8 45%,#C5D9EE)"></div>
<div style="position:absolute;left:764px;top:699px;width:1px;height:34px;background:#C8F4FF"></div>
<div style="position:absolute;left:689px;top:732px;width:76px;height:1px;background:#C8F4FF"></div>
<div style="position:absolute;left:689px;top:698px;width:78px;height:35px;display:flex;align-items:center;justify-content:center;font-size:12px;font-weight:bold;color:#000;text-align:center;line-height:14px">F9 戻る</div>
<div style="position:absolute;left:768px;top:697px;width:80px;height:37px;background:#6E6E6E"></div>
<div style="position:absolute;left:769px;top:698px;width:78px;height:36px;background:#FFFFFF"></div>
<div style="position:absolute;left:769px;top:733px;width:78px;height:1px;background:#A0A0A0"></div>
<div style="position:absolute;left:770px;top:699px;width:76px;height:33px;background:#EEEEEE"></div>
<div style="position:absolute;left:848px;top:697px;width:80px;height:37px;background:#6E6E6E"></div>
<div style="position:absolute;left:849px;top:698px;width:78px;height:36px;background:#FFFFFF"></div>
<div style="position:absolute;left:849px;top:733px;width:78px;height:1px;background:#A0A0A0"></div>
<div style="position:absolute;left:850px;top:699px;width:76px;height:33px;background:#EEEEEE"></div>
<div style="position:absolute;left:848px;top:697px;width:80px;height:37px;border:1px solid #6F8AA6;background:linear-gradient(#F6F9FD,#E9F0F8 45%,#C5D9EE)"></div>
<div style="position:absolute;left:851px;top:702px;font-size:12.5px;font-weight:bold;color:#000;line-height:15px;white-space:nowrap">F11単品ｺｰﾄﾞ<br>コピー</div>
<div style="position:absolute;left:928px;top:697px;width:80px;height:37px;background:#6E6E6E"></div>
<div style="position:absolute;left:929px;top:698px;width:78px;height:36px;background:#FFFFFF"></div>
<div style="position:absolute;left:929px;top:733px;width:78px;height:1px;background:#A0A0A0"></div>
<div style="position:absolute;left:930px;top:699px;width:76px;height:33px;background:#EEEEEE"></div>
<div style="position:absolute;left:1007px;top:697px;width:1px;height:37px;background:#A0A0A0"></div>
<div style="position:absolute;left:1008px;top:697px;width:2px;height:39px;background:#505050"></div>
<div style="position:absolute;left:684px;top:688px;width:85px;height:49px;border:4px solid #FF0000;border-radius:2px"></div>
</body></html>
